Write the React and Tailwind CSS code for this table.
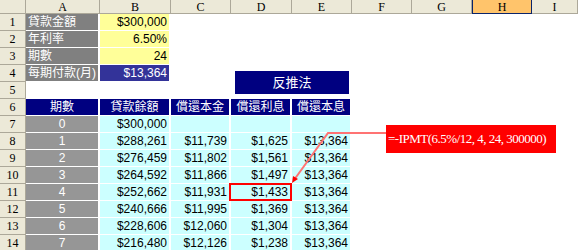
import React from 'react';

const cols = ['A', 'B', 'C', 'D', 'E', 'F', 'G', 'H', 'I'];

const inputs = [
  ['貸款金額', '$300,000', 'bg-[#ffff99] text-black'],
  ['年利率', '6.50%', 'bg-[#ffff99] text-black'],
  ['期數', '24', 'bg-[#ffff99] text-black'],
  ['每期付款(月)', '$13,364', 'bg-[#333399] text-white'],
];

const heads = ['期數', '貸款餘額', '償還本金', '償還利息', '償還本息'];

const schedule = [
  ['0', '$300,000', '', '', ''],
  ['1', '$288,261', '$11,739', '$1,625', '$13,364'],
  ['2', '$276,459', '$11,802', '$1,561', '$13,364'],
  ['3', '$264,592', '$11,866', '$1,497', '$13,364'],
  ['4', '$252,662', '$11,931', '$1,433', '$13,364'],
  ['5', '$240,666', '$11,995', '$1,369', '$13,364'],
  ['6', '$228,606', '$12,060', '$1,304', '$13,364'],
  ['7', '$216,480', '$12,126', '$1,238', '$13,364'],
];

const cellFont = "font-['Liberation_Sans','Noto_Sans_CJK_TC',sans-serif]";
const hdrFont = "font-['Liberation_Serif',serif]";

function RowHead({ n }) {
  return (
    <div className={`bg-[#ece9d8] border-r border-b border-[#aca899] flex items-center justify-center text-[12px] text-black ${hdrFont}`}>
      {n}
    </div>
  );
}

function Cell({ children, className = '', align = 'right' }) {
  const j = align === 'left' ? 'justify-start' : align === 'center' ? 'justify-center' : 'justify-end';
  return (
    <div className={`border-r-2 border-b border-white flex items-center px-[2px] leading-none whitespace-nowrap ${j} ${className}`}>
      {children}
    </div>
  );
}

const Empty = ({ count }) => Array.from({ length: count }, (_, i) => <div key={i} />);

export default function App() {
  return (
    <div className={`relative w-[578px] h-[250px] overflow-hidden bg-white ${cellFont}`}>
      <div className="grid grid-cols-[26px_74px_71px_60px_61px_60px_60px_60px_60px_1fr] grid-rows-[14px_repeat(14,17px)]">
        {/* column headers */}
        <div className="bg-[#ece9d8] border-r border-b border-[#aca899]" />
        {cols.map((c) => (
          <div
            key={c}
            className={`border-b flex items-center justify-center text-[12px] leading-none text-black ${hdrFont} ${
              c === 'H'
                ? 'bg-[#ffc46b] border-x border-[#0a246a] border-b-[#0a246a]'
                : 'bg-[#ece9d8] border-r border-[#aca899]'
            }`}
          >
            {c}
          </div>
        ))}

        {/* input block */}
        {inputs.map(([label, value, cls], i) => (
          <React.Fragment key={label}>
            <RowHead n={i + 1} />
            <Cell align="left" className="bg-[#808080] text-white text-[12px]">{label}</Cell>
            <Cell className={`text-[12px] ${cls}`}>{value}</Cell>
            <Empty count={7} />
          </React.Fragment>
        ))}

        {/* row 5 */}
        <RowHead n={5} />
        <Empty count={9} />

        {/* table headers */}
        <RowHead n={6} />
        {heads.map((h) => (
          <Cell key={h} align="center" className="bg-[#000080] text-white text-[12px]">{h}</Cell>
        ))}
        <Empty count={4} />

        {/* schedule */}
        {schedule.map((r, i) => (
          <React.Fragment key={r[0]}>
            <RowHead n={i + 7} />
            <Cell align="center" className="bg-[#969696] text-white text-[12px]">{r[0]}</Cell>
            {r.slice(1).map((v, j) => (
              <Cell key={j} className="bg-[#ccffff] text-black text-[12px]">{v}</Cell>
            ))}
            <Empty count={4} />
          </React.Fragment>
        ))}
      </div>

      {/* floating text box */}
      <div className="absolute left-[235px] top-[71px] w-[114px] h-[23px] bg-[#000080] text-white text-[13px] flex items-center justify-center">
        反推法
      </div>

      {/* highlighted cell D11 */}
      <div className="absolute left-[229px] top-[183px] w-[63px] h-[18px] border-2 border-[#ff0000]" />

      {/* callout connector */}
      <svg className="absolute inset-0 pointer-events-none" width="578" height="250">
        <polyline points="386,133 328,133 294,180" fill="none" stroke="#ff7373" strokeWidth="2" />
        <polygon points="292,183 293,176 298,179" fill="#ff0000" />
      </svg>

      {/* callout */}
      <div className="absolute left-[386px] top-[125px] w-[170px] h-[28px] bg-[#ff0000] text-white flex items-center pl-[2px] text-[13px] tracking-[-0.5px] font-['Liberation_Serif',serif] whitespace-nowrap">
        =-IPMT(6.5%/12, 4, 24, 300000)
      </div>
    </div>
  );
}
